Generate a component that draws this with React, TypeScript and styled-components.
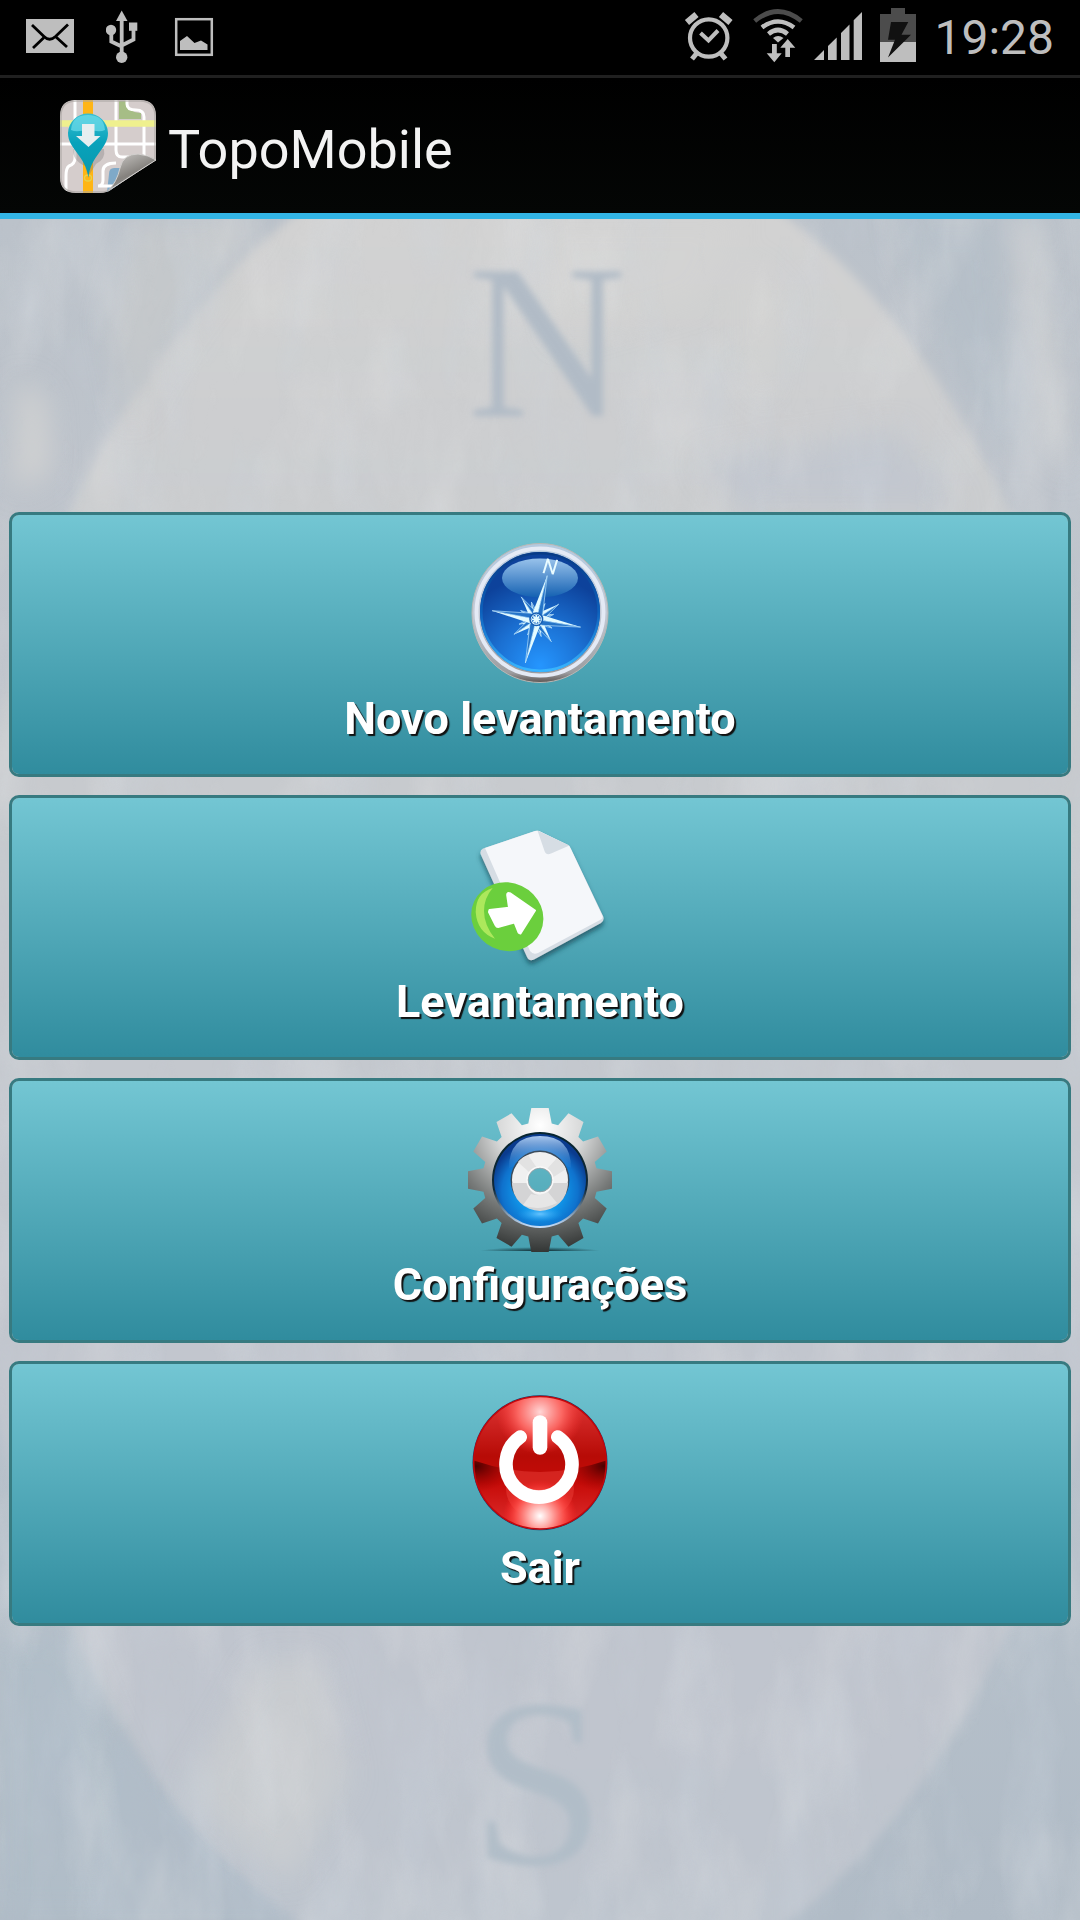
import React from "react";
import styled, { createGlobalStyle } from "styled-components";

const GlobalStyle = createGlobalStyle`
  *, *::before, *::after { box-sizing: border-box; }
  body {
    margin: 0;
    background: #000;
    font-family: Roboto, "Noto Sans", sans-serif;
  }
`;

const Screen = styled.div`
  display: flex;
  flex-direction: column;
  min-height: 100vh;
`;

const StatusBar = styled.div`
  display: flex;
  justify-content: space-between;
  align-items: center;
  height: 78px;
  padding: 0 26px;
  border-bottom: 3px solid #202020;
  background: #000;
`;

const StatusGroup = styled.div<{ $gap: number }>`
  display: flex;
  align-items: center;
  gap: ${(p) => p.$gap}px;
`;

const StatusIcon = styled.svg`
  display: block;
  height: 75px;
  flex: none;
`;

const Clock = styled.time`
  color: #bebebe;
  font-size: 48px;
  line-height: 72px;
`;

const AppBar = styled.header`
  display: flex;
  align-items: center;
  gap: 12px;
  height: 141px;
  padding: 0 60px;
  border-bottom: 6px solid #33b5e5;
  background: linear-gradient(#000, #040605);
`;

const AppLogo = styled.svg`
  display: block;
  width: 96px;
  height: 96px;
`;

const Title = styled.h1`
  margin: 0;
  padding-top: 8px;
  color: #f3f3f3;
  font-size: 54px;
  font-weight: 400;
  line-height: 64px;
`;

const Main = styled.main`
  position: relative;
  display: flex;
  flex: 1;
  flex-direction: column;
  justify-content: center;
  padding: 24px 9px 25px;
  overflow: hidden;
  background: #c2c7ce;
`;

const Backdrop = styled.svg`
  position: absolute;
  inset: 0;
  width: 100%;
  height: 100%;
`;

const Menu = styled.nav`
  position: relative;
  display: flex;
  flex-direction: column;
  gap: 18px;
`;

const MenuButton = styled.button`
  display: flex;
  flex-direction: column;
  align-items: center;
  gap: 3px;
  width: 100%;
  padding: 27px 16px 25px;
  border: 3px solid #377a80;
  border-radius: 10px;
  background: linear-gradient(#73c6d3, #308c9e) padding-box;
  color: #fff;
  font: 700 45px/60px Roboto, "Noto Sans", sans-serif;
  text-shadow: 2px 2px 1px #111;
  cursor: pointer;
`;

const MenuIcon = styled.svg`
  display: block;
  width: 144px;
  height: 144px;
  overflow: visible;
  text-shadow: none;
`;

const GREY = "#bebebe";

function Notifications() {
  return (
    <StatusGroup $gap={32}>
      <StatusIcon width="48" viewBox="26 0 48 75" role="img" aria-label="Mail">
        <rect x="26" y="19" width="48" height="34" fill={GREY} />
        <g fill="none" stroke="#000" strokeWidth="2.8">
          <path d="M32 25L44 36.500Q49.500 42 55.500 36.500L68 24.500" />
          <path d="M33 48L44 37.500M67 47L56 37" />
        </g>
      </StatusIcon>
      <StatusIcon width="32" viewBox="106 0 32 75" role="img" aria-label="USB">
        <g fill={GREY}>
          <path d="M121.700 10.500L127.500 21H116Z" />
          <circle cx="111" cy="30" r="5.200" />
          <rect x="129" y="22.500" width="8.300" height="8.300" />
          <circle cx="121.700" cy="57.300" r="5.700" />
        </g>
        <path d="M121.700 20V54M111.300 32V41.500L121.700 46.500M133.500 30V39.500L121.700 45.500" fill="none" stroke={GREY} strokeWidth="3.800" />
      </StatusIcon>
      <StatusIcon width="48" viewBox="170 0 48 75" role="img" aria-label="Screenshot saved">
        <rect x="176.200" y="19.200" width="35.600" height="35.600" fill="none" stroke={GREY} strokeWidth="2.500" />
        <path d="M180 50V41L187 36L194.500 43L201 40.500L207.500 44.500V50Z" fill={GREY} />
      </StatusIcon>
    </StatusGroup>
  );
}

function SystemStatus() {
  return (
    <StatusGroup $gap={10}>
      <StatusIcon width="60" viewBox="682 0 60 75" role="img" aria-label="Alarm set">
        <g fill="none" stroke={GREY}>
          <circle cx="708.700" cy="38" r="18.700" strokeWidth="4.200" />
          <path d="M700.500 33L708.500 40.500L718 30.500" strokeWidth="4" />
          <path d="M687 22.500L696.500 14.500M730.500 22.500L721 14.500" strokeWidth="6.500" />
          <path d="M697 53L692 59M720.500 53L725.500 59" strokeWidth="5" />
        </g>
      </StatusIcon>
      <StatusIcon width="50" viewBox="752 0 50 75" overflow="visible" role="img" aria-label="Wi-Fi">
        <g fill="none" strokeWidth="4.600">
          <path d="M754.700 21Q778 2 801.300 21" stroke="#4c4c4c" />
          <path d="M762 27.500Q778 15.500 794 27.500M768.500 34Q778 26 787.500 34" stroke={GREY} />
        </g>
        <g fill={GREY}>
          <path d="M773 38Q778 34 783.500 38L778 42.500Z" />
          <path d="M772 44H776.800V53.300H781.700L774.300 62.300L766.700 53.300H772Z" />
          <path d="M787.700 39L795.300 47.800H790V57H785.300V47.800H780.300Z" />
        </g>
      </StatusIcon>
      <StatusIcon width="50" viewBox="812 0 50 75" role="img" aria-label="Signal strength">
        <path d="M814 60L824 50V60ZM828 46L836.700 37.500V60H828ZM841 33L849.500 24.500V60H841ZM853.700 20.300L862 12V60H853.700Z" fill={GREY} />
      </StatusIcon>
      <StatusIcon width="52" viewBox="872 0 52 75" role="img" aria-label="Battery charging">
        <path d="M891 8H905V14H916V42H880V14H891Z" fill="#4c4c4c" />
        <path d="M880 42H916V62H880Z" fill={GREY} />
        <path d="M891 22H908.300L901.500 34.700H911L888 57.500L895 39.700H888Z" fill="#111" />
      </StatusIcon>
      <Clock>19:28</Clock>
    </StatusGroup>
  );
}

function Logo() {
  return (
    <AppLogo viewBox="0 0 96 96" aria-hidden="true">
      <defs>
        <clipPath id="map"><path d="M16 2H80Q96 2 96 18V62L52 91Q47 95 40 95H16Q0 95 0 79V18Q0 2 16 2Z" /></clipPath>
        <linearGradient id="pin" x1="0" y1="0" x2="0" y2="1">
          <stop offset="0" stopColor="#38bfd1" /><stop offset=".45" stopColor="#08a2bb" /><stop offset="1" stopColor="#0898ad" />
        </linearGradient>
        <linearGradient id="curl" x1="0" y1="0" x2=".6" y2="1">
          <stop offset=".1" stopColor="#c4c2bf" /><stop offset=".6" stopColor="#85827e" /><stop offset="1" stopColor="#aaa" />
        </linearGradient>
      </defs>
      <g clipPath="url(#map)">
        <rect width="96" height="96" fill="#d5cdcc" />
        <path d="M59 3V21H81V15Q70 16 66 3Z" fill="#a6bd86" />
        <path d="M49 76Q49 70 54 70H64L58 94H47Z" fill="#7fa9c8" />
        <g fill="none" stroke="#fff" strokeWidth="3">
          <path d="M15 0V60Q15 66 9 68Q6 70 6 78V96M0 46H96M56 2V52Q56 59 62 59H88M67 2V6Q67 12 76 12Q84 12 84 19V58M54 88H38Q43 88 43 82V73Q43 65 56 65" />
        </g>
        <path d="M28 0V96" stroke="#ffb515" strokeWidth="10" />
        <path d="M0 25.500H96" stroke="#eff08e" strokeWidth="6.500" />
      </g>
      <path d="M13 51Q12 62 25 68L28 79L36 66Q46 61 44 51Z" fill="#77777755" />
      <ellipse cx="28" cy="80" rx="3.500" ry="3" fill="none" stroke="#e6d14c" strokeWidth="1.300" />
      <path d="M28 15.500A20 20 0 0 1 48 35C48 51 30 58 28.500 80C26 58 8 51 8 35A20 20 0 0 1 28 15.500Z" fill="url(#pin)" />
      <path d="M11 32Q12 17 28 17Q44 17 45 32Q39 35 28 31Q17 35 11 32Z" fill="#75e1ee" opacity=".65" />
      <path d="M22 26H34.500V38H40.500L28.500 49L16 38H22Z" fill="#e6eef0" />
      <path d="M48 93Q57 84 60 70Q63 56 78 56Q89 57 96 62Q80 72 48 93Z" fill="url(#curl)" stroke="#d2d0ce" strokeWidth="1" />
      <path d="M1 79V18Q1 3 16 3H80Q95 3 95 18V61M1 79Q1 94 16 94H40Q47 94 51 91" fill="none" stroke="#aaa5a2" strokeWidth="1.500" opacity=".7" />
    </AppLogo>
  );
}

// A compass-rose ray: a lit half and a thin outlined half.
function Ray({ angle, length, width }: { angle: number; length: number; width: number }) {
  return (
    <g transform={`rotate(${angle} 68.300 77.300)`}>
      <path d={`M68.300 77.300V${77.3 - length}L${68.3 - width} 71Z`} fill="#e3fbff" />
      <path d={`M68.300 77.300V${77.3 - length}L${68.3 + width} 71Z`} fill="#2474c8" stroke="#bfe8ff" strokeWidth=".6" />
    </g>
  );
}

function CompassIcon() {
  return (
    <MenuIcon viewBox="0 0 144 144" aria-hidden="true">
      <defs>
        <linearGradient id="rim" x1="0" y1="0" x2="0" y2="1">
          <stop offset="0" stopColor="#b3c9df" /><stop offset=".5" stopColor="#c3cad6" /><stop offset=".93" stopColor="#9c9da0" /><stop offset="1" stopColor="#5d5654" />
        </linearGradient>
        <radialGradient id="dial" cx=".5" cy=".95" r=".75">
          <stop offset="0" stopColor="#2596ff" /><stop offset=".5" stopColor="#1b70d2" /><stop offset="1" stopColor="#0d429b" />
        </radialGradient>
        <linearGradient id="dialEdge" x1="0" y1="0" x2="0" y2="1">
          <stop offset="0" stopColor="#083b86" /><stop offset=".5" stopColor="#0d62bd" /><stop offset="1" stopColor="#39b6ff" />
        </linearGradient>
        <linearGradient id="gloss" x1="0" y1="0" x2="0" y2="1">
          <stop offset="0" stopColor="#98c2eb" /><stop offset="1" stopColor="#1461b2" />
        </linearGradient>
      </defs>
      <ellipse cx="72" cy="71" rx="68" ry="69.500" fill="url(#rim)" stroke="#b8b8b5" strokeWidth="1" />
      <circle cx="72" cy="70" r="63.500" fill="none" stroke="#e4eaf5" strokeWidth="4" />
      <circle cx="72" cy="70" r="60" fill="url(#dial)" />
      <circle cx="72" cy="70" r="58.700" fill="none" stroke="url(#dialEdge)" strokeWidth="2.500" />
      <ellipse cx="72" cy="36" rx="38" ry="19.500" fill="url(#gloss)" />
      <text x="74" y="31" fill="#e9fbff" fontSize="21" fontStyle="italic" fontWeight="400" fontFamily="Roboto, sans-serif" transform="rotate(7 74 31)">N</text>
      {[37, 82, 127, 172, 217, 262, 307, 352].map((a) => <Ray key={a} angle={a - 8} length={18} width={3} />)}
      {[56, 146, 236, 326].map((a) => <Ray key={a} angle={a} length={27} width={4} />)}
      {[14, 100, 194, 281].map((a) => <Ray key={a} angle={a} length={45} width={5} />)}
      <circle cx="68.300" cy="77.300" r="6.300" fill="#e3fbff" stroke="#155fb5" strokeWidth="1.500" />
      <circle cx="68.300" cy="77.300" r="4.700" fill="#1665c2" />
      <path d="M68.300 73V81.600M64 77.300H72.600M65.300 74.300L71.300 80.300M71.300 74.300L65.300 80.300" stroke="#e3fbff" strokeWidth="1.800" />
    </MenuIcon>
  );
}

function DocumentIcon() {
  return (
    <MenuIcon viewBox="0 0 144 144" aria-hidden="true">
      <defs>
        <filter id="paperShadow" x="-20%" y="-20%" width="140%" height="150%"><feDropShadow dx="0" dy="4" stdDeviation="2.500" floodColor="#163f4e" floodOpacity=".65" /></filter>
      </defs>
      <g filter="url(#paperShadow)">
        <path d="M15 23.500L67 6Q70 5 73 7L99 19.500Q101.500 21 103 24L135 91Q137 95 133 98L66 134.500Q61.500 137 59 132L13 30Q11 26 15 23.500Z" fill="#d6dde4" />
      </g>
      <path d="M17 23L67 6Q70 5 73 7L101.500 21L134 90Q136 93 132 95L70 128Q65 130 62 126Z" fill="#f5f7fa" />
      <path d="M69.500 5.500L101.500 20.500L83 28.500Q78.500 31 76.500 26Z" fill="#d6dde4" />
      <ellipse cx="39.300" cy="91.700" rx="36.500" ry="34" transform="rotate(25 39.300 91.700)" fill="#6bcf3d" />
      <path d="M24.700 63Q7.700 68 7.700 87Q9 107 27 113.700Q16 100 16 86Q16 73 24.700 63Z" fill="#ace85c" />
      <path d="M21.500 85L41 82.700L39.200 70Q39 67 42.500 68.500L67 85.500L52.500 108.500L50.500 107.500L46.500 97.500L30 102Q28.500 102 27.500 100L21 87Z" fill="#fff" stroke="#fff" strokeWidth="2" strokeLinejoin="round" />
    </MenuIcon>
  );
}

// Twelve flat-topped teeth around a 144px wheel.
const gearPath = (() => {
  const points: string[] = [];
  for (let i = 0; i < 12; i++) {
    const a = (i * Math.PI) / 6;
    for (const [dx, r] of [[-11.7, 56.5], [-8.7, 72], [8.7, 72], [11.7, 56.5]]) {
      const x = 72 + dx * Math.cos(a) + r * Math.sin(a);
      const y = 72 + dx * Math.sin(a) - r * Math.cos(a);
      points.push(`${x.toFixed(2)} ${y.toFixed(2)}`);
    }
  }
  return `M${points.join("L")}ZM84 72A12 12 0 1 0 60 72A12 12 0 1 0 84 72Z`;
})();

const ring = (r: number, inner: number) =>
  `M${72 - r} 72A${r} ${r} 0 1 1 ${72 + r} 72A${r} ${r} 0 1 1 ${72 - r} 72ZM${72 - inner} 72A${inner} ${inner} 0 1 0 ${72 + inner} 72A${inner} ${inner} 0 1 0 ${72 - inner} 72Z`;

function GearIcon() {
  return (
    <MenuIcon viewBox="0 0 144 144" aria-hidden="true">
      <defs>
        <radialGradient id="metal" cx=".5" cy=".12" r=".88">
          <stop offset="0" stopColor="#fff" /><stop offset=".35" stopColor="#d6d7d7" /><stop offset=".7" stopColor="#777a79" /><stop offset="1" stopColor="#333635" />
        </radialGradient>
        <radialGradient id="floor"><stop offset="0" stopColor="#0b2228" stopOpacity=".95" /><stop offset="1" stopColor="#0b2228" stopOpacity="0" /></radialGradient>
        <radialGradient id="blue" cx=".5" cy=".62" r=".55">
          <stop offset=".4" stopColor="#109bed" /><stop offset=".75" stopColor="#0f72cd" /><stop offset="1" stopColor="#0a3b8e" />
        </radialGradient>
        <linearGradient id="bezel" x1="0" y1="0" x2="0" y2="1">
          <stop offset="0" stopColor="#07252f" /><stop offset=".6" stopColor="#102838" /><stop offset="1" stopColor="#c9e2ff" />
        </linearGradient>
        <linearGradient id="shine" x1="0" y1="0" x2="0" y2="1">
          <stop offset="0" stopColor="#a9c8ef" /><stop offset="1" stopColor="#4b95dc" stopOpacity=".1" />
        </linearGradient>
        <radialGradient id="glow"><stop offset="0" stopColor="#66c4ff" /><stop offset="1" stopColor="#209ef0" stopOpacity="0" /></radialGradient>
      </defs>
      <ellipse cx="72" cy="143" rx="60" ry="4" fill="url(#floor)" clipPath="inset(0 0 4px 0)" />
      <path d={gearPath} fill="url(#metal)" fillRule="evenodd" />
      <path d={ring(48, 20)} fill="url(#bezel)" />
      <path d={ring(46, 20)} fill="url(#blue)" />
      <path d="M41 60Q41 28 72 28Q103 28 103 60L95 57Q88 43 72 43Q56 43 49 57Z" fill="url(#shine)" />
      <ellipse cx="72" cy="106" rx="23" ry="8" fill="url(#glow)" />
      <path d={ring(29.5, 12)} fill="#3c4c5c" />
      <path d={ring(28, 12)} fill="#f0f0f0" />
      <path d="M44 75A28 28 0 0 0 100 75H84A12 12 0 0 1 60 75Z" fill="#d4d4d5" />
      <path d="M50 54L62 65Q66 60 69 60L60 47Q54 49 50 54ZM79 61L89 50Q96 55 98 61L84 70Q83 63 79 61Z" fill="#e2e2e2" />
      <path d="M63 86L55 97Q70 104 89 95L80 84Q72 89 63 86Z" fill="#e6e6e6" />
      <circle cx="72" cy="72" r="13" fill="none" stroke="#f8f8f8" strokeWidth="1.500" />
      <circle cx="72" cy="72" r="11.800" fill="none" stroke="#9ba5a8" strokeWidth=".8" />
    </MenuIcon>
  );
}

function PowerIcon() {
  return (
    <MenuIcon viewBox="0 0 144 144" aria-hidden="true">
      <defs>
        <linearGradient id="red" x1="0" y1="0" x2="0" y2="1">
          <stop offset="0" stopColor="#e03838" /><stop offset=".45" stopColor="#b70b06" /><stop offset=".65" stopColor="#c60b08" /><stop offset="1" stopColor="#df3030" />
        </linearGradient>
        <radialGradient id="lightTop"><stop offset="0" stopColor="#ffd6d6" /><stop offset=".5" stopColor="#ff6d68" stopOpacity=".9" /><stop offset="1" stopColor="#f33" stopOpacity="0" /></radialGradient>
        <radialGradient id="lightBottom"><stop offset="0" stopColor="#fff" /><stop offset=".3" stopColor="#ffaeaa" /><stop offset=".65" stopColor="#ff544f" stopOpacity=".85" /><stop offset="1" stopColor="#f22" stopOpacity="0" /></radialGradient>
        <radialGradient id="dark"><stop offset="0" stopColor="#4b0000" /><stop offset="1" stopColor="#900" stopOpacity="0" /></radialGradient>
        <clipPath id="ball"><circle cx="72" cy="71.700" r="66.500" /></clipPath>
        <clipPath id="below"><path d="M4 69Q72 93 140 69V144H4Z" /></clipPath>
      </defs>
      <circle cx="72" cy="71.700" r="67.500" fill="#183d69" />
      <g clipPath="url(#ball)">
        <circle cx="72" cy="71.700" r="67" fill="url(#red)" />
        <ellipse cx="72" cy="21" rx="44" ry="42" fill="url(#lightTop)" />
        <g clipPath="url(#below)">
          <ellipse cx="8" cy="75" rx="38" ry="26" fill="url(#dark)" />
          <ellipse cx="136" cy="75" rx="38" ry="26" fill="url(#dark)" />
          <ellipse cx="72" cy="98" rx="34" ry="30" fill="#f34a43" opacity=".4" />
        </g>
        <ellipse cx="72" cy="125" rx="37" ry="36" fill="url(#lightBottom)" />
      </g>
      <circle cx="72" cy="71.700" r="66.300" fill="none" stroke="#c4070c" strokeWidth="1.500" />
      <g fill="none" stroke="#fff" strokeLinecap="round">
        <path d="M52.200 46A33 33 0 1 0 89.800 46" strokeWidth="13.600" />
        <path d="M72 31.500V56.500" strokeWidth="14.600" />
      </g>
    </MenuIcon>
  );
}

// Weathered compass-dial wall behind the menu.
function WallBackdrop() {
  return (
    <Backdrop viewBox="0 219 1080 1701" preserveAspectRatio="xMidYMid slice" aria-hidden="true">
      <defs>
        <linearGradient id="wall" x1="0" y1="0" x2="0" y2="1">
          <stop offset="0" stopColor="#bbc2ca" /><stop offset=".35" stopColor="#c2c6cd" /><stop offset=".8" stopColor="#b6c0ca" /><stop offset="1" stopColor="#b0bbc6" />
        </linearGradient>
        <linearGradient id="disc" x1="0" y1="0" x2="0" y2="1">
          <stop offset=".05" stopColor="#d2d2d2" /><stop offset=".25" stopColor="#c8cbce" /><stop offset=".6" stopColor="#c2c6ce" /><stop offset="1" stopColor="#bec5ce" />
        </linearGradient>
        <filter id="streaksDark" x="0" y="0" width="100%" height="100%">
          <feTurbulence type="fractalNoise" baseFrequency=".018 .006" numOctaves="4" seed="4" />
          <feColorMatrix values="0 0 0 0 .62  0 0 0 0 .68  0 0 0 0 .75  2.200 0 0 0 -1" />
        </filter>
        <filter id="streaksLight" x="0" y="0" width="100%" height="100%">
          <feTurbulence type="fractalNoise" baseFrequency=".015 .006" numOctaves="4" seed="11" />
          <feColorMatrix values="0 0 0 0 .83  0 0 0 0 .83  0 0 0 0 .83  2.400 0 0 0 -1.100" />
        </filter>
        <filter id="soft" x="-50%" y="-50%" width="200%" height="200%"><feGaussianBlur stdDeviation="14" /></filter>
        <filter id="edge"><feGaussianBlur stdDeviation="5" /></filter>
        <filter id="paint"><feGaussianBlur stdDeviation="3" /></filter>
      </defs>
      <rect y="219" width="1080" height="1701" fill="url(#wall)" />
      <ellipse cx="540" cy="1070" rx="583" ry="942" fill="url(#disc)" filter="url(#edge)" />
      <g filter="url(#soft)">
        <path d="M530 219H740L700 300L560 340Z" fill="#d6d6d3" opacity=".5" />
        <path d="M745 260L785 300L765 400L745 360Z" fill="#d6d6d3" opacity=".6" />
        <path d="M1015 219H1038L1068 480L1042 420Z" fill="#cfd0d1" />
        <path d="M20 380L45 400L50 470L15 490Z" fill="#d0d1d2" />
        <path d="M140 219H260L180 330L130 420L110 320Z" fill="#c4c8cb" />
        <path d="M700 460L900 430L960 512H740Z" fill="#bfc5ce" opacity=".7" />
        <path d="M260 1660L320 1660L350 1780L290 1880L230 1840L185 1790Z" fill="#cfd1d2" opacity=".55" />
        <path d="M0 1640H70L125 1770L150 1920H0Z" fill="#b1bdc9" opacity=".7" />
        <path d="M895 219H1000L1020 460L960 380Z" fill="#b3bdc7" opacity=".7" />
      </g>
      <path d="M120 1730Q170 1830 300 1920H90Z" fill="#b1bdc9" opacity=".6" filter="url(#edge)" />
      <rect y="219" width="1080" height="1701" filter="url(#streaksDark)" opacity=".28" />
      <rect y="219" width="1080" height="1701" filter="url(#streaksLight)" opacity=".24" />
      <g fontFamily="'Liberation Serif', serif" textAnchor="middle" filter="url(#paint)">
        <text x="547" y="416" fontSize="220" fill="#b1bbc6">N</text>
        <text x="538" y="1864" fontSize="240" fill="#b1bdc8">S</text>
      </g>
    </Backdrop>
  );
}

const entries = [
  { label: "Novo levantamento", Icon: CompassIcon },
  { label: "Levantamento", Icon: DocumentIcon },
  { label: "Configurações", Icon: GearIcon },
  { label: "Sair", Icon: PowerIcon },
];

export default function App() {
  return (
    <Screen>
      <GlobalStyle />
      <StatusBar>
        <Notifications />
        <SystemStatus />
      </StatusBar>
      <AppBar>
        <Logo />
        <Title>TopoMobile</Title>
      </AppBar>
      <Main>
        <WallBackdrop />
        <Menu aria-label="Menu">
          {entries.map(({ label, Icon }) => (
            <MenuButton key={label} type="button">
              <Icon />
              <span>{label}</span>
            </MenuButton>
          ))}
        </Menu>
      </Main>
    </Screen>
  );
}
